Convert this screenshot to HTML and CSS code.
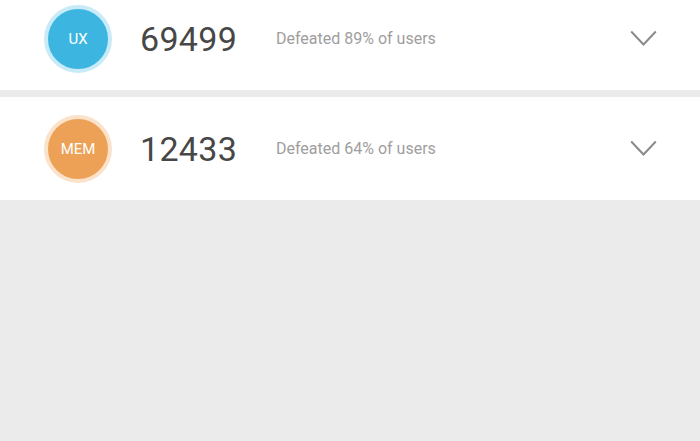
FILE: index.html
```html
<!DOCTYPE html>
<html>
<head>
<meta charset="utf-8">
<link rel="stylesheet" href="styles.css">
</head>
<body>
<div class="list">
  <div class="card">
    <div class="badge badge-ux"><span>UX</span></div>
    <div class="score">69499</div>
    <div class="desc">Defeated 89% of users</div>
    <svg class="chev" width="27" height="17" viewBox="0 0 27 17"><path d="M1.2 1.5 L13.5 14.5 L25.8 1.5" fill="none" stroke="#8a8a8a" stroke-width="2"/></svg>
  </div>
  <div class="card">
    <div class="badge badge-mem"><span>MEM</span></div>
    <div class="score">12433</div>
    <div class="desc">Defeated 64% of users</div>
    <svg class="chev" width="27" height="17" viewBox="0 0 27 17"><path d="M1.2 1.5 L13.5 14.5 L25.8 1.5" fill="none" stroke="#8a8a8a" stroke-width="2"/></svg>
  </div>
</div>
</body>
</html>
```
FILE: styles.css
```css
html, body {
  margin: 0;
  padding: 0;
  background: #ebebeb;
  font-family: Roboto, "Liberation Sans", sans-serif;
  overflow: hidden;
}
.list {
  margin-top: -13px;
  display: flex;
  flex-direction: column;
  gap: 7px;
}
.card {
  background: #fff;
  height: 103px;
  display: flex;
  align-items: center;
  padding-left: 44px;
  padding-right: 43px;
  box-sizing: border-box;
}
.badge {
  width: 68px;
  height: 68px;
  border-radius: 50%;
  display: flex;
  align-items: center;
  justify-content: center;
  flex: none;
  box-sizing: border-box;
  border: 4px solid;
}
.badge span {
  color: #fff;
  font-size: 15px;
}
.badge-ux {
  background: #3cb6e1;
  border-color: #c9ebf8;
}
.badge-mem {
  background: #eca157;
  border-color: #fbe2ca;
}
.score {
  margin-left: 28px;
  width: 136px;
  font-size: 34px;
  color: #474747;
  letter-spacing: 0.3px;
}
.desc {
  font-size: 16px;
  color: #9e9e9e;
  flex: 1;
}
.chev {
  flex: none;
}
```
